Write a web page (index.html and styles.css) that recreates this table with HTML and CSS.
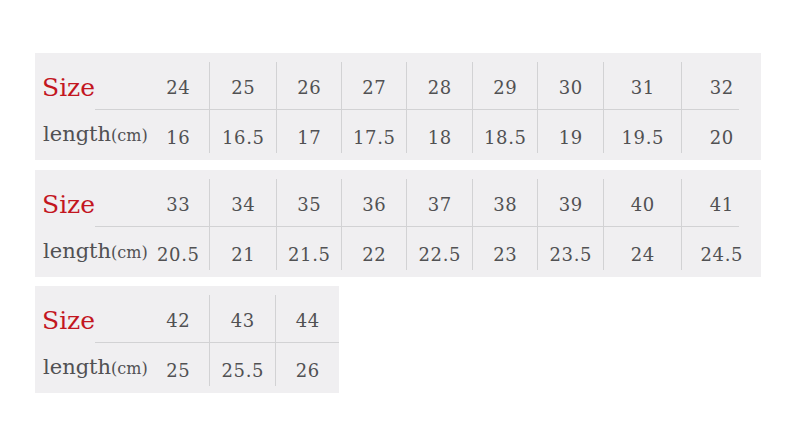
FILE: index.html
```html
<!DOCTYPE html>
<html>
<head>
<meta charset="utf-8">
<link rel="stylesheet" href="styles.css">
</head>
<body>
<div class="charts">
  <div class="panel full">
    <div class="c r1 label"><span class="size">Size</span></div>
    <div class="c r1 first"><span>24</span></div>
    <div class="c r1 v"><span>25</span></div>
    <div class="c r1 v"><span>26</span></div>
    <div class="c r1 v"><span>27</span></div>
    <div class="c r1 v"><span>28</span></div>
    <div class="c r1 v"><span>29</span></div>
    <div class="c r1 v"><span>30</span></div>
    <div class="c r1 v"><span>31</span></div>
    <div class="c r1 v short"><span>32</span></div>
    <div class="c r2 label2"><span class="len">length<small>(cm)</small></span></div>
    <div class="c r2"><span>16</span></div>
    <div class="c r2 v"><span>16.5</span></div>
    <div class="c r2 v"><span>17</span></div>
    <div class="c r2 v"><span>17.5</span></div>
    <div class="c r2 v"><span>18</span></div>
    <div class="c r2 v"><span>18.5</span></div>
    <div class="c r2 v"><span>19</span></div>
    <div class="c r2 v"><span>19.5</span></div>
    <div class="c r2 v"><span>20</span></div>
  </div>
  <div class="panel full">
    <div class="c r1 label"><span class="size">Size</span></div>
    <div class="c r1 first"><span>33</span></div>
    <div class="c r1 v"><span>34</span></div>
    <div class="c r1 v"><span>35</span></div>
    <div class="c r1 v"><span>36</span></div>
    <div class="c r1 v"><span>37</span></div>
    <div class="c r1 v"><span>38</span></div>
    <div class="c r1 v"><span>39</span></div>
    <div class="c r1 v"><span>40</span></div>
    <div class="c r1 v short"><span>41</span></div>
    <div class="c r2 label2"><span class="len">length<small>(cm)</small></span></div>
    <div class="c r2"><span>20.5</span></div>
    <div class="c r2 v"><span>21</span></div>
    <div class="c r2 v"><span>21.5</span></div>
    <div class="c r2 v"><span>22</span></div>
    <div class="c r2 v"><span>22.5</span></div>
    <div class="c r2 v"><span>23</span></div>
    <div class="c r2 v"><span>23.5</span></div>
    <div class="c r2 v"><span>24</span></div>
    <div class="c r2 v"><span>24.5</span></div>
  </div>
  <div class="panel part">
    <div class="c r1 label"><span class="size">Size</span></div>
    <div class="c r1 first"><span>42</span></div>
    <div class="c r1 v"><span>43</span></div>
    <div class="c r1 v"><span>44</span></div>
    <div class="c r2 label2"><span class="len">length<small>(cm)</small></span></div>
    <div class="c r2"><span>25</span></div>
    <div class="c r2 v"><span>25.5</span></div>
    <div class="c r2 v"><span>26</span></div>
  </div>
</div>
</body>
</html>
```
FILE: styles.css
```css
html, body {
  margin: 0;
  padding: 0;
  background: #ffffff;
}
body {
  font-family: "DejaVu Serif", "Liberation Serif", serif;
  color: #515153;
}
.charts {
  display: flex;
  flex-direction: column;
  align-items: flex-start;
  gap: 10px;
  padding: 53px 0 0 35px;
}
.panel {
  display: grid;
  grid-template-rows: 48px 43px;
  padding: 9px 0 7px 0;
  background: #f0eff1;
}
.panel.part {
  margin-top: -1px;
  grid-template-columns: 112px 62px 66px 64px;
}
.panel.full {
  grid-template-columns: 112px 62px 67px 65px 65px 66px 65px 66px 78px 80px;
}
.c {
  display: flex;
  align-items: flex-end;
  justify-content: center;
  font-size: 18px;
  line-height: 1;
  letter-spacing: 0.7px;
  box-sizing: border-box;
}
.c span {
  margin-right: -0.7px;
}
.r1 {
  border-bottom: 1px solid #d2d2d4;
  padding-bottom: 12px;
}
.r2 {
  padding-bottom: 6px;
}
.v {
  border-left: 1px solid #d2d2d4;
}
.label {
  border-bottom: none;
  justify-content: flex-start;
  padding-left: 7px;
  padding-bottom: 10px;
  background: linear-gradient(#d2d2d4, #d2d2d4) no-repeat 60px 100% / calc(100% - 60px) 1px;
}
.short {
  border-bottom: none;
  padding-bottom: 13px;
  background: linear-gradient(#d2d2d4, #d2d2d4) no-repeat 0 100% / 57px 1px;
}
.label2 {
  justify-content: flex-start;
  padding-left: 8px;
  padding-bottom: 8px;
}
.size {
  font-size: 25px;
  color: #c3161f;
  letter-spacing: 0;
}
.len {
  font-size: 21px;
  letter-spacing: 0;
}
.len small {
  font-size: 16px;
}
```
